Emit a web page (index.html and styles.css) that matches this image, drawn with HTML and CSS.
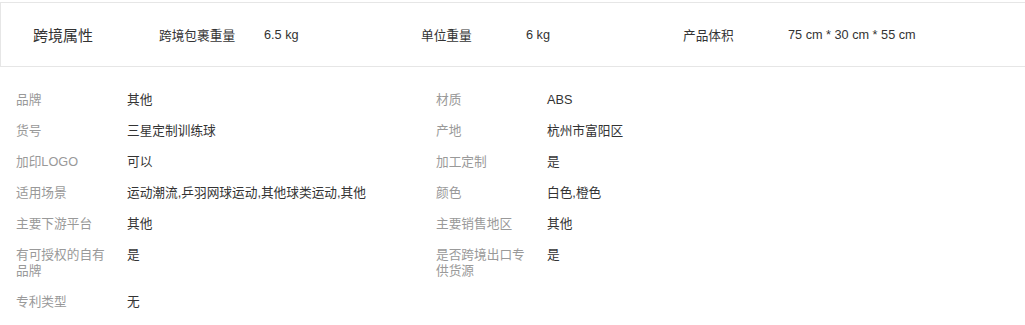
FILE: index.html
```html
<!DOCTYPE html>
<html lang="zh-CN">
<head>
<meta charset="utf-8">
<title>商品属性</title>
<link rel="stylesheet" href="styles.css">
</head>
<body>
<div class="cross">
  <div class="cross-title">跨境属性</div>
  <div class="cross-item"><span class="cross-label">跨境包裹重量</span><span class="cross-value">6.5 kg</span></div>
  <div class="cross-item"><span class="cross-label">单位重量</span><span class="cross-value">6 kg</span></div>
  <div class="cross-item"><span class="cross-label">产品体积</span><span class="cross-value">75 cm * 30 cm * 55 cm</span></div>
</div>
<div class="attrs">
  <div class="attr"><div class="attr-label">品牌</div><div class="attr-value">其他</div></div>
  <div class="attr"><div class="attr-label">材质</div><div class="attr-value">ABS</div></div>
  <div class="attr"><div class="attr-label">货号</div><div class="attr-value">三星定制训练球</div></div>
  <div class="attr"><div class="attr-label">产地</div><div class="attr-value">杭州市富阳区</div></div>
  <div class="attr"><div class="attr-label">加印LOGO</div><div class="attr-value">可以</div></div>
  <div class="attr"><div class="attr-label">加工定制</div><div class="attr-value">是</div></div>
  <div class="attr"><div class="attr-label">适用场景</div><div class="attr-value">运动潮流,乒羽网球运动,其他球类运动,其他</div></div>
  <div class="attr"><div class="attr-label">颜色</div><div class="attr-value">白色,橙色</div></div>
  <div class="attr"><div class="attr-label">主要下游平台</div><div class="attr-value">其他</div></div>
  <div class="attr"><div class="attr-label">主要销售地区</div><div class="attr-value">其他</div></div>
  <div class="attr"><div class="attr-label">有可授权的自有品牌</div><div class="attr-value">是</div></div>
  <div class="attr"><div class="attr-label">是否跨境出口专供货源</div><div class="attr-value">是</div></div>
  <div class="attr"><div class="attr-label">专利类型</div><div class="attr-value">无</div></div>
</div>
</body>
</html>
```

FILE: styles.css
```css
html, body {
  margin: 0;
  padding: 0;
  overflow: hidden;
  background: #fff;
}
body {
  font-family: "Liberation Sans", "Noto Sans CJK SC", sans-serif;
  font-size: 12.7px;
  color: #333;
  padding-top: 2px;
}
.cross {
  width: 1040px;
  height: 63px;
  border: 1px solid #e6e6e6;
  display: flex;
  align-items: center;
  box-sizing: content-box;
}
.cross-title {
  width: 126px;
  padding-left: 32px;
  font-size: 15px;
  color: #333;
}
.cross-item {
  width: 262px;
  display: flex;
  align-items: center;
}
.cross-label {
  width: 105px;
  color: #333;
}
.cross-value {
  color: #333;
}
.attrs {
  margin-top: 17px;
  padding-left: 16px;
  display: grid;
  grid-template-columns: 420px 420px;
}
.attr {
  display: flex;
  padding: 7.5px 0;
  line-height: 16px;
}
.attr-label {
  width: 100px;
  margin-right: 11px;
  color: #999;
}
.attr-value {
  color: #333;
}
```
